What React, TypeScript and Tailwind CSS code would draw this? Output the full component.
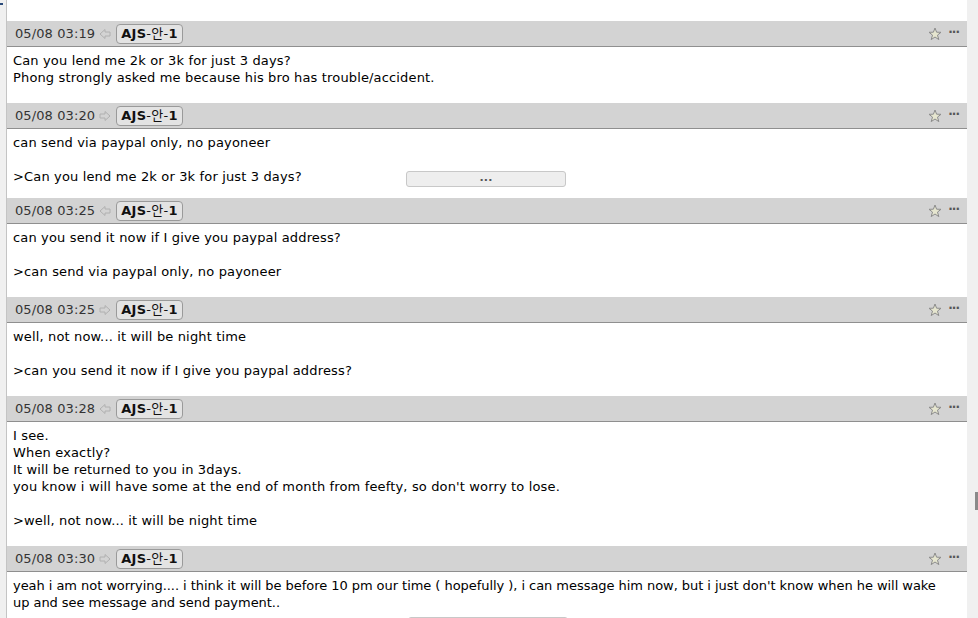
import React from "react";

type Msg = {
	time: string;
	dir: "in" | "out";
	lines: string[];
	pb?: string;
	more?: boolean;
	tight?: boolean;
};

const messages: Msg[] = [
	{
		time: "05/08 03:19",
		dir: "in",
		lines: ["Can you lend me 2k or 3k for just 3 days?", "Phong strongly asked me because his bro has trouble/accident."],
	},
	{
		time: "05/08 03:20",
		dir: "out",
		lines: ["can send via paypal only, no payoneer", "", ">Can you lend me 2k or 3k for just 3 days?"],
		pb: "pb-[13px]",
		more: true,
	},
	{
		time: "05/08 03:25",
		dir: "in",
		lines: ["can you send it now if I give you paypal address?", "", ">can send via paypal only, no payoneer"],
	},
	{
		time: "05/08 03:25",
		dir: "out",
		lines: ["well, not now... it will be night time", "", ">can you send it now if I give you paypal address?"],
	},
	{
		time: "05/08 03:28",
		dir: "in",
		lines: [
			"I see.",
			"When exactly?",
			"It will be returned to you in 3days.",
			"you know i will have some at the end of month from feefty, so don't worry to lose.",
			"",
			">well, not now... it will be night time",
		],
	},
	{
		time: "05/08 03:30",
		dir: "out",
		lines: [
			"yeah i am not worrying.... i think it will be before 10 pm our time ( hopefully ), i can message him now, but i just don't know when he will wake",
			"up and see message and send payment..",
		],
		pb: "pb-[6px]",
		tight: true,
	},
];

function Arrow({ dir }: { dir: "in" | "out" }) {
	return (
		<svg width="12" height="12" viewBox="0 0 12 12" className={dir === "in" ? "" : "rotate-180"}>
			<path d="M1 6 L6 1.5 V4 H11 V8 H6 V10.5 Z" fill="none" stroke="#b0b0b0" strokeWidth="1" strokeLinejoin="miter" />
		</svg>
	);
}

function Star() {
	return (
		<svg width="14" height="14" viewBox="0 0 14 14">
			<path
				d="M7 1 L8.6 5.2 L13 5.3 L9.5 8.1 L10.8 12.6 L7 10 L3.2 12.6 L4.5 8.1 L1 5.3 L5.4 5.2 Z"
				fill="#e6e6cf"
				stroke="#8c8c8c"
				strokeWidth="1"
				strokeLinejoin="miter"
			/>
		</svg>
	);
}

function MoreButton({ dots = true }: { dots?: boolean }) {
	return (
		<div className="flex h-[16px] w-[160px] items-center justify-center rounded-[3px] border border-[#c8c8c8] bg-[#eeeeee] pb-[4px] text-[11px] font-bold leading-none text-[#555]">
			{dots ? "..." : null}
		</div>
	);
}

function Message({ m }: { m: Msg }) {
	return (
		<div>
			<div className="flex h-[26px] items-center border-b border-[#8f8f8f] bg-[#d3d3d3] pl-[8px] pr-[8px]">
				<span className="text-[13px] tracking-[0.1px] text-[#333]">{m.time}</span>
				<span className="ml-[4px] mr-[5px] flex items-center">
					<Arrow dir={m.dir} />
				</span>
				<span className="flex h-[20px] items-center rounded-[4px] border border-[#9a9a9a] bg-[#e3e3e3] px-[4px] text-[13px] tracking-[0.3px] text-[#111]">
					<b>AJS</b>
					<span>-안-</span>
					<b>1</b>
				</span>
				<div className="ml-auto flex items-center gap-[6px]">
					<Star />
					<span className="pb-[4px] text-[12px] font-bold leading-none tracking-[-1px] text-[#555]">···</span>
				</div>
			</div>
			<div className={`relative pl-[6px] pt-[5px] ${m.pb ?? "pb-[17px]"} text-[13px] leading-[17px] ${m.tight ? "tracking-[-0.05px]" : "tracking-[0.15px]"} text-black`}>
				{m.lines.map((l, i) => (
					<div key={i} className="h-[17px] whitespace-nowrap">
						{l}
					</div>
				))}
				{m.more && (
					<div className="absolute left-[399px] top-[42px]">
						<MoreButton />
					</div>
				)}
			</div>
		</div>
	);
}

export default function App() {
	return (
		<div className="flex h-[618px] w-[978px] overflow-hidden bg-white font-['DejaVu_Sans','Noto_Sans_CJK_KR',sans-serif]">
			<div className="relative w-[7px] shrink-0 border-r border-[#c4c4c4] bg-[#f0f0f0]">
				<div className="absolute left-0 top-[3px] h-[2px] w-[3px] bg-[#2a4a7a]" />
			</div>
			<div className="flex w-[960px] shrink-0 flex-col pt-[21px]">
				{messages.map((m, i) => (
					<Message key={i} m={m} />
				))}
				<div className="ml-[401px]">
					<MoreButton dots={false} />
				</div>
			</div>
			<div className="relative flex-1 bg-[#f0f0f0]">
				<div className="absolute left-[8px] top-[492px] h-[18px] w-[3px] bg-[#8a8a8a]" />
			</div>
		</div>
	);
}
